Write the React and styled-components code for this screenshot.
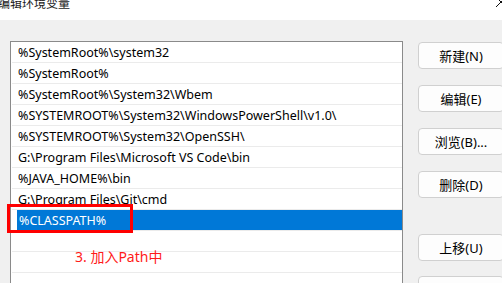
import React from 'react'
import styled, { createGlobalStyle } from 'styled-components'

const GlobalStyle = createGlobalStyle`
  html, body {
    margin: 0;
    padding: 0;
    background: #f0f0f0;
  }
  body {
    font-family: 'Noto Sans', 'Noto Sans CJK SC', sans-serif;
    color: #000;
  }
`

const Window = styled.div`
  position: relative;
  width: 502px;
  height: 283px;
  overflow: hidden;
  display: flex;
  flex-direction: column;
  background: #f0f0f0;
`

const TitleBar = styled.div`
  height: 20px;
  flex: none;
  background: #fff;
  display: flex;
  align-items: flex-start;
  justify-content: space-between;
`

const Title = styled.div`
  font-family: 'Noto Sans CJK SC', sans-serif;
  font-size: 12px;
  line-height: 12px;
  margin-top: -3px;
  margin-left: -2px;
  color: #1a1a1a;
`

const Close = styled.svg`
  margin-top: -4px;
  margin-right: -5px;
`

const Body = styled.div`
  flex: 1;
  display: flex;
  padding: 21px 0 0 10px;
  gap: 15px;
`

const ListBox = styled.div`
  width: 390px;
  height: 300px;
  flex: none;
  background: #fff;
  border: 1px solid #8a8a8a;
  padding-left: 1px;
  box-sizing: content-box;
`

const Row = styled.div`
  height: 20px;
  border-bottom: 1px solid #ebebeb;
  display: flex;
  align-items: center;
  padding-left: ${p => (p.$selected ? '5px' : '6px')};
  font-size: 12.5px;
  white-space: nowrap;
`

const Selected = styled.div`
  flex: 1;
  align-self: stretch;
  display: flex;
  align-items: center;
  padding-left: 2px;
  background: #0078d7;
  color: #fff;
`

const Buttons = styled.div`
  display: flex;
  flex-direction: column;
  padding-top: 1px;
`

const Button = styled.button`
  width: 86px;
  height: 27px;
  margin-bottom: ${p => p.$gap}px;
  background: #fdfdfd;
  border: 1px solid #d0d0d0;
  border-radius: 4px;
  font-family: 'Noto Sans', 'Noto Sans CJK SC', sans-serif;
  font-size: 13px;
  color: #000;
  padding: 0;
`

const Highlight = styled.div`
  position: absolute;
  left: 7px;
  top: 204px;
  width: 126px;
  height: 29px;
  border: 3px solid #ff0000;
  box-sizing: border-box;
`

const Note = styled.div`
  position: absolute;
  left: 75px;
  top: 247px;
  font-family: 'Noto Sans', 'Noto Sans CJK SC', sans-serif;
  font-size: 14px;
  line-height: 20px;
  color: #ff1a1a;
`

const paths = [
  '%SystemRoot%\\system32',
  '%SystemRoot%',
  '%SystemRoot%\\System32\\Wbem',
  '%SYSTEMROOT%\\System32\\WindowsPowerShell\\v1.0\\',
  '%SYSTEMROOT%\\System32\\OpenSSH\\',
  'G:\\Program Files\\Microsoft VS Code\\bin',
  '%JAVA_HOME%\\bin',
  'G:\\Program Files\\Git\\cmd'
]

const buttons = [
  ['新建(N)', 16],
  ['编辑(E)', 16],
  ['浏览(B)...', 16],
  ['删除(D)', 36],
  ['上移(U)', 15],
  ['下移(O)', 15]
]

export default function App() {
  return (
    <>
      <GlobalStyle />
      <Window>
        <TitleBar>
          <Title>编辑环境变量</Title>
          <Close width="12" height="12" viewBox="0 0 12 12">
            <path d="M1 1 L11 11 M11 1 L1 11" stroke="#111" strokeWidth="1" fill="none" />
          </Close>
        </TitleBar>
        <Body>
          <ListBox>
            {paths.map(p => (
              <Row key={p}>{p}</Row>
            ))}
            <Row $selected>
              <Selected>%CLASSPATH%</Selected>
            </Row>
            <Row />
            <Row />
            <Row />
          </ListBox>
          <Buttons>
            {buttons.map(([label, gap]) => (
              <Button key={label} $gap={gap}>
                {label}
              </Button>
            ))}
          </Buttons>
        </Body>
        <Highlight />
        <Note>3. 加入Path中</Note>
      </Window>
    </>
  )
}
